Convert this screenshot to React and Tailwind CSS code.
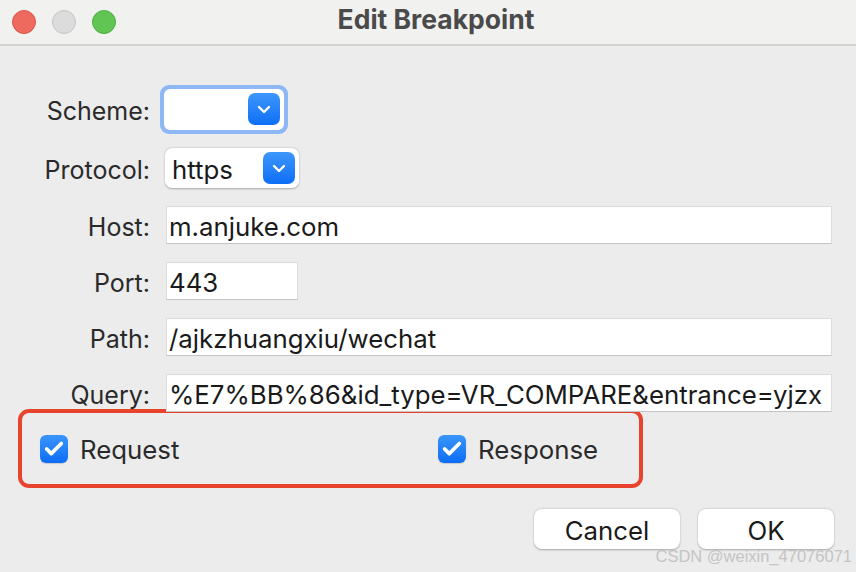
import { Check } from 'lucide-react'

const font = { fontFamily: 'Inter, "Noto Sans", sans-serif' }

const Chevron = () => (
    <svg width="14" height="9" viewBox="0 0 14 9" fill="none">
        <path d="M2 2 L7 7 L12 2" stroke="white" strokeWidth="2.4" strokeLinecap="round" strokeLinejoin="round" />
    </svg>
)

const ArrowBox = () => (
    <div className="w-[32px] h-[32px] rounded-[7px] bg-gradient-to-b from-[#3d97fb] to-[#0b6ef6] flex items-center justify-center">
        <Chevron />
    </div>
)

const Field = ({ value, width }) => (
    <div className={`h-[38px] bg-white border border-[#dcdcdc] border-b-[#c4c4c4] flex items-center pl-[2px] pt-[3px] text-[25.8px] leading-[30px] text-[#1a1a1a] overflow-hidden whitespace-nowrap ${width}`}>
        {value}
    </div>
)

const Label = ({ children }) => (
    <div className="text-[25px] leading-[30px] text-[#2a2a2a] text-right pr-[16px] pt-[3px] w-[166px] shrink-0">{children}</div>
)

const CheckItem = ({ label, width }) => (
    <div className={`flex items-center gap-[12px] ${width}`}>
        <div className="w-[28px] h-[28px] rounded-[6px] bg-gradient-to-b from-[#3a95fa] to-[#0a6df5] flex items-center justify-center shadow-[0_1px_1px_rgba(0,0,0,0.15)]">
            <Check size={22} strokeWidth={4} color="white" />
        </div>
        <span className="text-[25.8px] leading-[30px] text-[#2a2a2a] pt-[3px]">{label}</span>
    </div>
)

export default function App() {
    return (
        <div className="w-[856px] h-[572px] bg-[#ececec] relative overflow-hidden" style={font}>
            <header className="h-[46px] bg-[#f1f1f0] border-b-2 border-[#d3d3d3] flex items-center relative">
                <div className="flex items-center gap-[16px] pl-[12px]">
                    <span className="w-[24px] h-[24px] rounded-full bg-[#ee6a5f] border border-[#d6574c]" />
                    <span className="w-[24px] h-[24px] rounded-full bg-[#dcdcdc] border border-[#c6c6c6]" />
                    <span className="w-[24px] h-[24px] rounded-full bg-[#61c554] border border-[#4fad43]" />
                </div>
                <h1 className="absolute left-[16px] right-0 text-center text-[26.5px] leading-[32px] font-bold text-[#4a4a4a] pointer-events-none -mt-[6px]">
                    Edit Breakpoint
                </h1>
            </header>

            <div className="pt-[39px] pr-[24px] flex flex-col">
                <div className="flex items-center h-[48px]">
                    <Label>Scheme:</Label>
                    <div className="-ml-[6px] p-[4px] rounded-[9px] bg-[#8db7f5]">
                        <div className="w-[120px] h-[41px] rounded-[6px] bg-white flex items-center justify-end pr-[4px]">
                            <ArrowBox />
                        </div>
                    </div>
                </div>

                <div className="flex items-center h-[40px] mt-[15px]">
                    <Label>Protocol:</Label>
                    <div className="w-[134px] h-[40px] -ml-[1px] rounded-[7px] bg-white shadow-[0_0.5px_2px_rgba(0,0,0,0.3)] flex items-center justify-between pl-[7px] pr-[4px]">
                        <span className="text-[25.8px] leading-[30px] text-[#1a1a1a] pt-[3px]">https</span>
                        <ArrowBox />
                    </div>
                </div>

                <div className="flex items-center h-[38px] mt-[18px]">
                    <Label>Host:</Label>
                    <Field value="m.anjuke.com" width="flex-1" />
                </div>
                <div className="flex items-center h-[38px] mt-[18px]">
                    <Label>Port:</Label>
                    <Field value="443" width="w-[132px]" />
                </div>
                <div className="flex items-center h-[38px] mt-[18px]">
                    <Label>Path:</Label>
                    <Field value="/ajkzhuangxiu/wechat" width="flex-1" />
                </div>
                <div className="flex items-center h-[38px] mt-[18px]">
                    <Label>Query:</Label>
                    <Field value="%E7%BB%86&id_type=VR_COMPARE&entrance=yjzx" width="flex-1" />
                </div>
            </div>

            <div className="ml-[18px] -mt-[3px] w-[625px] h-[79px] border-[4px] border-[#e8432d] rounded-[11px] flex items-center pl-[18px]">
                <CheckItem label="Request" width="w-[398px]" />
                <CheckItem label="Response" width="" />
            </div>

            <div className="flex justify-end gap-[18px] pr-[22px] mt-[21px]">
                <button className="w-[146px] h-[40px] rounded-[8px] bg-white shadow-[0_0.5px_2px_rgba(0,0,0,0.3)] text-[25.8px] leading-[30px] text-[#1a1a1a] pt-[3px]">Cancel</button>
                <button className="w-[136px] h-[40px] rounded-[8px] bg-white shadow-[0_0.5px_2px_rgba(0,0,0,0.3)] text-[25.8px] leading-[30px] text-[#1a1a1a] pt-[3px]">OK</button>
            </div>

            <div className="absolute right-[4px] bottom-[8px] text-[16.5px] leading-[16px] text-[#c4c4c4]" style={{ fontFamily: '"Liberation Sans", sans-serif' }}>
                CSDN @weixin_47076071
            </div>
        </div>
    )
}
